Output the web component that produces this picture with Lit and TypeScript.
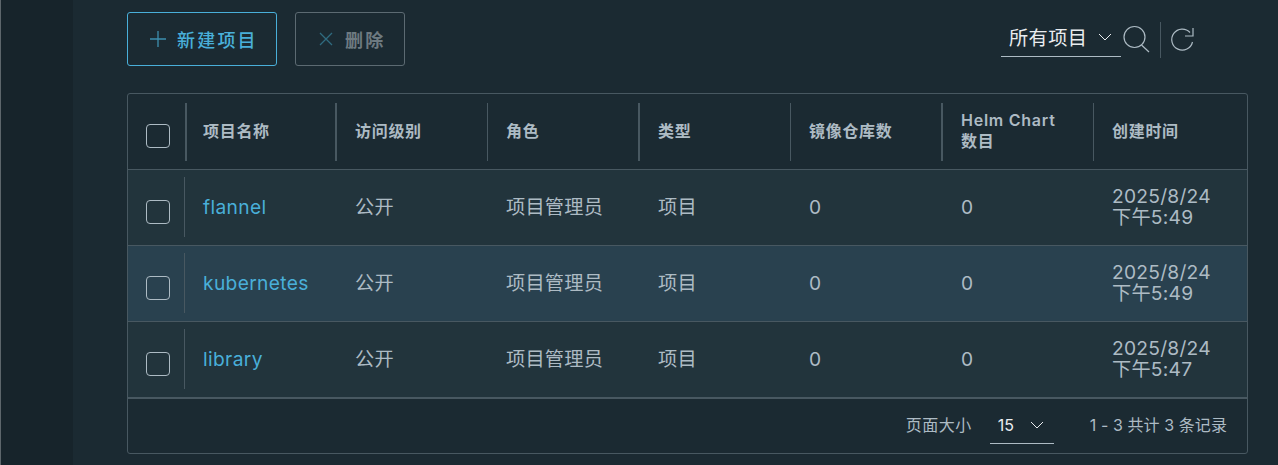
import { LitElement, html, css } from "lit";
import { customElement } from "lit/decorators.js";

const rows = [
  ["flannel", "2025/8/24", "下午5:49", false],
  ["kubernetes", "2025/8/24", "下午5:49", true],
  ["library", "2025/8/24", "下午5:47", false],
] as const;
const offsets = [18, 20, 19, 20, 19, 20, 19];
const heads = [
  { t: "项目名称", thick: true },
  { t: "访问级别", thick: true },
  { t: "角色", thick: false },
  { t: "类型", thick: true },
  { t: "镜像仓库数", thick: false },
  { t: "Helm Chart 数目", thick: true },
  { t: "创建时间", thick: false },
];

@customElement("app-root")
export class AppRoot extends LitElement {
  static styles = css`
    :host { display: flex; width: 1278px; height: 465px; overflow: hidden; background: #1b2a32; font-family: "Inter", "Noto Sans CJK SC", sans-serif; color: #adbbc4; }
    .rail { width: 73px; flex: none; background: #17242b; border-left: 1px solid #5d666b; box-sizing: border-box; }
    .main { flex: 1; padding: 12px 30px 0 54px; min-width: 0; }
    .bar { display: flex; align-items: flex-start; height: 81px; }
    .btn { box-sizing: border-box; height: 54px; background: none; font-family: inherit; border: 1px solid #49afd9; border-radius: 3px; display: flex; align-items: center; font-size: 18px; font-weight: 500; letter-spacing: 2.2px; color: #49afd9; }
    .add { width: 150px; padding: 0 0 0 21px; gap: 10px; }
    .del { width: 110px; padding: 0 0 0 22px; gap: 11px; margin-left: 18px; border-color: #5c6a72; color: #6e7a81; font-weight: 700; }
    .del svg { color: #2f6b80; }
    .add svg { color: #3d8fae; }
    .tools { margin-left: auto; margin-right: 52px; display: flex; align-items: flex-start; margin-top: 10px; }
    .filter { box-sizing: border-box; width: 120px; height: 35px; border-bottom: 1px solid #adbbc4; display: flex; align-items: center; justify-content: space-between; padding: 0 9px 5px 8px; color: #e9ecef; font-size: 19.2px; letter-spacing: .4px; }
    .icon-s { margin: 3px 0 0 2px; color: #adbbc4; }
    .sep { width: 1px; height: 36px; background: #485861; margin: 0 8px 0 9px; }
    .icon-r { margin-top: 3px; margin-left: 1px; color: #adbbc4; }
    .grid { box-sizing: border-box; width: 1121px; height: 361px; border: 1px solid #485861; border-radius: 3px; overflow: hidden; }
    .row { display: grid; grid-template-columns: 57px 150px 152px 151px 152px 151px 152px 1fr; border-bottom: 1px solid #485861; height: 76px; box-sizing: border-box; }
    .body { background: #22343c; }
    .body.sel { background: #29414f; }
    .cell { display: flex; align-items: center; padding-right: 17px; padding-bottom: 3px; box-sizing: border-box; min-width: 0; font-size: 19.2px; letter-spacing: .25px; }
    .cell.num { padding-bottom: 1px; }
    .head .cell { font-size: 16px; font-weight: 700; letter-spacing: .7px; line-height: 21px; margin: 9px 0 8px; border-left: 1px solid #485861; padding-bottom: 2px; }
    .head .cell.thick { border-left-width: 2px; }
    .head .cb, .body .cb { border: 0; margin: 0; padding: 0; justify-content: center; }
    .latin { letter-spacing: .75px; font-weight: 600; }
    .box { width: 24px; height: 24px; box-sizing: border-box; border: 1px solid #adbbc4; border-radius: 4px; margin-top: 9px; margin-left: 2px; }
    .body .box { margin-top: 8px; }
    .lead { height: 60px; border-left: 1px solid #485861; }
    .namecell { padding-left: 0; gap: 18px; margin-left: -1px; padding-bottom: 1px; }
    a { color: #49afd9; text-decoration: none; letter-spacing: .35px; }
    .date { line-height: 21px; padding-bottom: 2px; }
    .last { border-bottom: 2px solid #485861; height: 77px; }
    .foot { height: 54px; display: flex; align-items: center; justify-content: flex-end; padding-right: 20px; font-size: 16px; color: #adbbc4; }
    .pl { letter-spacing: .5px; padding-bottom: 5px; }
    .tot { letter-spacing: .08px; padding-bottom: 5px; }
    .size { box-sizing: border-box; width: 64px; height: 36px; margin: 0 36px 0 18px; border-bottom: 1px solid #adbbc4; display: flex; align-items: center; justify-content: space-between; padding: 0 10px 2px 8px; color: #e9ecef; }
  `;

  chev() {
    return html`<svg width="14" height="8" viewBox="0 0 14 8" fill="none" stroke="currentColor" stroke-width="1"><path d="M1 1l6 6 6-6"/></svg>`;
  }

  head(h: { t: string; thick: boolean }, i: number) {
    const pad = offsets[i] - (h.thick ? 2 : 1);
    const m = h.t.match(/^([A-Za-z ]+) (.+)$/);
    return html`<div class="cell ${h.thick ? "thick" : ""}" style="padding-left:${pad}px">
      <span>${m ? html`<span class="latin">${m[1]}</span> ${m[2]}` : h.t}</span>
    </div>`;
  }

  render() {
    const vals = ["公开", "项目管理员", "项目", "0", "0"];
    return html`
      <div class="rail"></div>
      <div class="main">
        <div class="bar">
          <button class="btn add">
            <svg width="18" height="18" viewBox="0 0 18 18" fill="none" stroke="currentColor" stroke-width="1.3"><path d="M9 1v16M1 9h16"/></svg>新建项目
          </button>
          <button class="btn del">
            <svg width="16" height="16" viewBox="0 0 16 16" fill="none" stroke="currentColor" stroke-width="1.3"><path d="M2 2l12 12M14 2L2 14"/></svg>删除
          </button>
          <div class="tools">
            <div class="filter"><span>所有项目</span>${this.chev()}</div>
            <svg class="icon-s" width="28" height="28" viewBox="0 0 28 28" fill="none" stroke="currentColor" stroke-width="1.2"><circle cx="11.5" cy="12" r="10.5"/><path d="M18.5 20l7.5 7"/></svg>
            <div class="sep"></div>
            <svg class="icon-r" width="26" height="28" viewBox="0 0 26 28" fill="none" stroke="currentColor" stroke-width="1.2"><path d="M20 7.5A10.5 10.5 0 1 0 22.5 17M23 3v8h-8"/></svg>
          </div>
        </div>
        <div class="grid">
          <div class="row head">
            <div class="cell cb"><div class="box"></div></div>
            ${heads.map((h, i) => this.head(h, i))}
          </div>
          ${rows.map((r, i) => html`
            <div class="row body ${r[3] ? "sel" : ""} ${i === 2 ? "last" : ""}">
              <div class="cell cb"><div class="box"></div></div>
              <div class="cell namecell"><div class="lead"></div><a>${r[0]}</a></div>
              ${vals.map((v, j) => html`<div class="cell ${v === "0" ? "num" : ""}" style="padding-left:${offsets[j + 1]}px">${v}</div>`)}
              <div class="cell date" style="padding-left:${offsets[6]}px"><span>${r[1]}<br />${r[2]}</span></div>
            </div>`)}
          <div class="foot"><span class="pl">页面大小</span><div class="size"><span>15</span>${this.chev()}</div><span class="tot">1 - 3 共计 3 条记录</span></div>
        </div>
      </div>
    `;
  }
}
